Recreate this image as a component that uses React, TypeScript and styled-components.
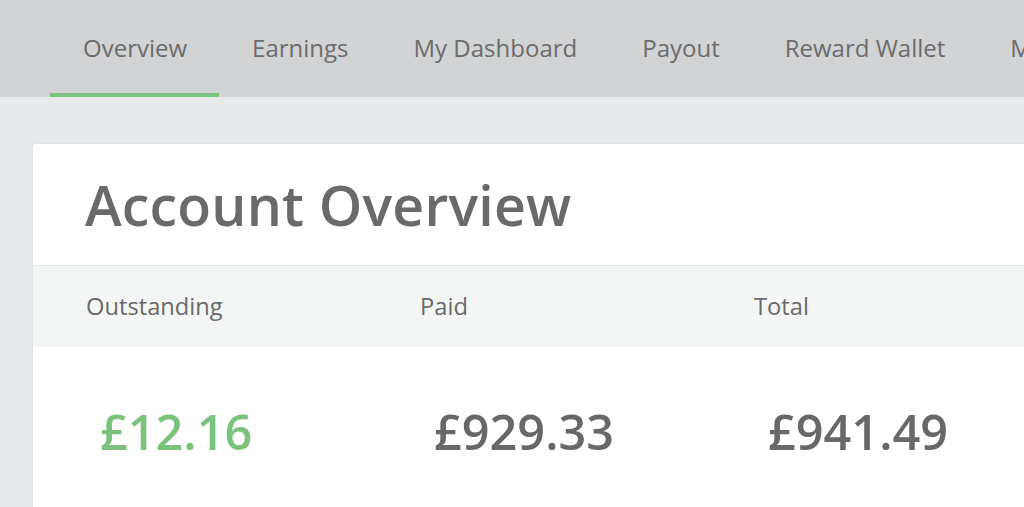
import { createGlobalStyle, styled } from "styled-components";

const GlobalStyle = createGlobalStyle`
  html, body {
    margin: 0;
    padding: 0;
    overflow: hidden;
    background: #e8e9eb;
    font-family: "Open Sans", "Noto Sans", sans-serif;
    color: #676767;
  }
`;

const NavBar = styled.nav`
  height: 97px;
  background: #d1d3d5;
  display: flex;
  padding-left: 50px;
  white-space: nowrap;
  overflow: hidden;
`;

const Tab = styled.a<{ $active?: boolean }>`
  display: block;
  box-sizing: border-box;
  height: 97px;
  padding: 0 32px 0 33px;
  font-size: 24px;
  line-height: 95px;
  color: #6c6c6c;
  text-decoration: none;
  border-bottom: 4px solid ${({ $active }) => ($active ? "#7dc47f" : "transparent")};
`;

const Main = styled.main`
  padding: 46px 0 0 32px;
`;

const Card = styled.section`
  background: #fff;
  border: 1px solid #e1e3e5;
  border-right: none;
  border-radius: 4px 0 0 0;
  margin-right: -40px;
`;

const Title = styled.h1`
  margin: 0;
  height: 121px;
  display: flex;
  align-items: center;
  padding: 0 52px;
  font-size: 55.4px;
  font-weight: 600;
  color: #6a6a6a;
  letter-spacing: 0.2px;
`;

const Row = styled.div<{ $head?: boolean }>`
  display: grid;
  grid-template-columns: repeat(3, 334px);
  padding-left: 53px;
  align-items: center;
  height: ${({ $head }) => ($head ? "79px" : "170px")};
  background: ${({ $head }) => ($head ? "#f4f6f5" : "#fff")};
  border-top: ${({ $head }) => ($head ? "1px solid #e4e7e7" : "none")};
  border-bottom: ${({ $head }) => ($head ? "1px solid #e8ebeb" : "none")};
`;

const Label = styled.div`
  font-size: 23.7px;
  color: #6a6a6a;
`;

const Value = styled.div<{ $green?: boolean }>`
  padding-left: 14px;
  font-size: 48.6px;
  font-weight: 600;
  color: ${({ $green }) => ($green ? "#7bc27d" : "#686868")};
`;

const tabs = ["Overview", "Earnings", "My Dashboard", "Payout", "Reward Wallet", "My Account"];

const figures = [
  { label: "Outstanding", value: "£12.16", green: true },
  { label: "Paid", value: "£929.33" },
  { label: "Total", value: "£941.49" },
];

export default function App() {
  return (
    <>
      <GlobalStyle />
      <NavBar>
        {tabs.map((t, i) => (
          <Tab key={t} href="#" $active={i === 0}>
            {t}
          </Tab>
        ))}
      </NavBar>
      <Main>
        <Card>
          <Title>Account Overview</Title>
          <Row $head>
            {figures.map((f) => (
              <Label key={f.label}>{f.label}</Label>
            ))}
          </Row>
          <Row>
            {figures.map((f) => (
              <Value key={f.label} $green={f.green}>
                {f.value}
              </Value>
            ))}
          </Row>
        </Card>
      </Main>
    </>
  );
}
